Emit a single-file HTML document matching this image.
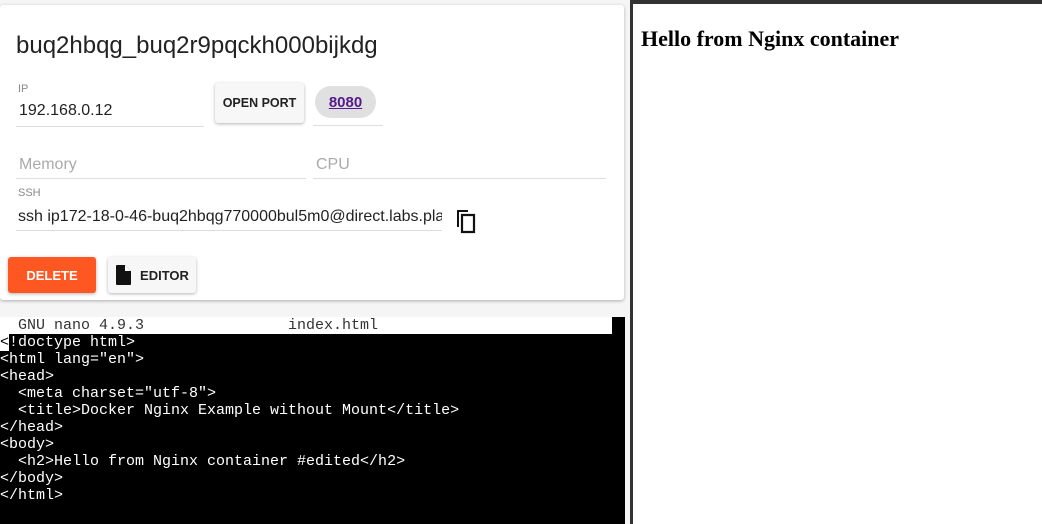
<!DOCTYPE html>
<html><head><meta charset="utf-8"><style>
*{margin:0;padding:0;box-sizing:border-box}
body{width:1042px;height:524px;overflow:hidden;background:#f5f5f5;font-family:"Liberation Sans",sans-serif;position:relative}
.card{position:absolute;left:0;top:5px;width:624px;height:295px;background:#fff;border-radius:3px;box-shadow:0 1px 3px rgba(0,0,0,.3)}
.abs{position:absolute}
.lbl{font-size:11px;color:#888}
.ul{border-bottom:1px solid #ddd}
.btn{position:absolute;border-radius:3px;box-shadow:0 1px 3px rgba(0,0,0,.3);font-size:13px;font-weight:bold;display:flex;align-items:center;justify-content:center}
.term{position:absolute;left:0;top:317px;width:625px;height:207px;background:#000}
.bar{position:absolute;left:0;top:317px;width:612px;height:17px;background:#fff;color:#333}
pre{font-family:"Liberation Mono",monospace;font-size:15px;line-height:17px;color:#fff;position:absolute;left:0;top:334px}
.right{position:absolute;left:630px;top:0;width:412px;height:524px;background:#fff;border-left:3px solid #333;border-top:4px solid #333}
</style></head><body>
<div class="card">
<div class="abs" style="left:16px;top:27px;font-size:24px;color:#222">buq2hbqg_buq2r9pqckh000bijkdg</div>
<div class="abs lbl" style="left:18px;top:78px">IP</div>
<div class="abs ul" style="left:16px;top:97px;width:188px;height:25px;font-size:16px;color:#222;padding-left:3px">192.168.0.12</div>
<div class="btn" style="left:215px;top:78px;width:89px;height:40px;background:#f7f7f7;color:#222;font-size:12.5px">OPEN PORT</div>
<div class="abs" style="left:315px;top:81px;width:61px;height:32px;background:#e0e0e0;border-radius:16px;font-size:15px;font-weight:bold;color:#551a8b;text-decoration:underline;display:flex;align-items:center;justify-content:center">8080</div>
<div class="abs ul" style="left:313px;top:120px;width:70px;height:1px"></div>
<div class="abs ul" style="left:16px;top:151px;width:290px;height:23px;font-size:16px;color:#aaa;padding-left:3px">Memory</div>
<div class="abs ul" style="left:313px;top:151px;width:293px;height:23px;font-size:16px;color:#aaa;padding-left:3px">CPU</div>
<div class="abs lbl" style="left:18px;top:182px">SSH</div>
<div class="abs ul" style="left:16px;top:203px;width:426px;height:23px;overflow:hidden;padding-left:2px"><div style="font-size:16px;color:#222;white-space:nowrap">ssh ip172-18-0-46-buq2hbqg770000bul5m0@direct.labs.play-with-docker.com</div></div>
<svg class="abs" style="left:454px;top:203px" width="24" height="26" viewBox="0 0 24 26"><path d="M3 2h11v2H5v15H3z" fill="#111"/><path d="M8 7h12v17H8z" fill="none" stroke="#111" stroke-width="2.2"/></svg>
<div class="btn" style="left:8px;top:252px;width:88px;height:36px;background:#ff5722;color:#fff">DELETE</div>
<div class="btn" style="left:108px;top:252px;width:88px;height:36px;background:#f7f7f7;color:#222"><svg width="16" height="20" viewBox="0 0 16 20" style="margin-right:9px"><path d="M2 0h8l6 6v13a1 1 0 0 1-1 1H2a1 1 0 0 1-1-1V1a1 1 0 0 1 1-1z" fill="#111"/><path d="M10 0v6h6" fill="#fff"/></svg>EDITOR</div>
</div>
<div class="term"></div>
<div class="bar"><pre style="position:absolute;top:0;left:0;color:#333">  GNU nano 4.9.3                index.html</pre></div>
<pre><span style="background:#fff;color:#000">&lt;</span>!doctype html&gt;
&lt;html lang="en"&gt;
&lt;head&gt;
  &lt;meta charset="utf-8"&gt;
  &lt;title&gt;Docker Nginx Example without Mount&lt;/title&gt;
&lt;/head&gt;
&lt;body&gt;
  &lt;h2&gt;Hello from Nginx container #edited&lt;/h2&gt;
&lt;/body&gt;
&lt;/html&gt;</pre>
<div class="right"><div style="position:absolute;left:8px;top:22px;font-family:'Liberation Serif',serif;font-size:22px;font-weight:bold;color:#000">Hello from Nginx container</div></div>
</body></html>
